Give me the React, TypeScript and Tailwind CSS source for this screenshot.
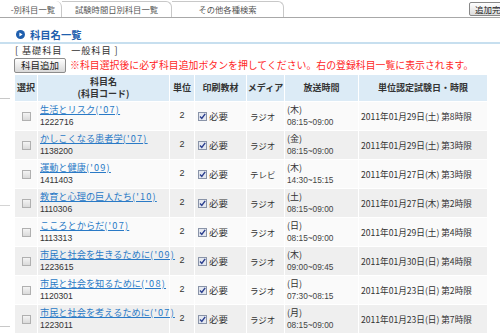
import React from "react";

const rows = [
  { name: "生活とリスク", yr: "('07)", code: "1222716", media: "ラジオ", day: "(木)", time: "08:15~09:00", exam: "2011年01月29日(土) 第8時限" },
  { name: "かしこくなる患者学", yr: "('07)", code: "1138200", media: "ラジオ", day: "(金)", time: "08:15~09:00", exam: "2011年01月29日(土) 第3時限" },
  { name: "運動と健康", yr: "('09)", code: "1411403", media: "テレビ", day: "(木)", time: "14:30~15:15", exam: "2011年01月27日(木) 第3時限" },
  { name: "教育と心理の巨人たち", yr: "('10)", code: "1110306", media: "ラジオ", day: "(土)", time: "08:15~09:00", exam: "2011年01月27日(木) 第2時限" },
  { name: "こころとからだ", yr: "('07)", code: "1113313", media: "ラジオ", day: "(日)", time: "08:15~09:00", exam: "2011年01月29日(土) 第4時限" },
  { name: "市民と社会を生きるために", yr: "('09)", code: "1223615", media: "ラジオ", day: "(木)", time: "09:00~09:45", exam: "2011年01月30日(日) 第4時限" },
  { name: "市民と社会を知るために", yr: "('08)", code: "1120301", media: "ラジオ", day: "(日)", time: "07:30~08:15", exam: "2011年01月23日(日) 第2時限" },
  { name: "市民と社会を考えるために", yr: "('07)", code: "1223011", media: "ラジオ", day: "(月)", time: "08:15~09:00", exam: "2011年01月23日(日) 第7時限" },
];

function Checked() {
  return (
    <svg width="9" height="9" viewBox="0 0 9 9" className="shrink-0">
      <rect x="0.5" y="0.5" width="8" height="8" fill="#e4e8f0" stroke="#8a94a8" />
      <path d="M2 4.5 L3.8 6.5 L7.2 1.8" fill="none" stroke="#2b3f8f" strokeWidth="1.4" />
    </svg>
  );
}

export default function App() {
  return (
    <div
      className="w-[500px] h-[335px] overflow-hidden bg-white text-[#333]"
      style={{ fontFamily: '"Noto Sans CJK JP", "Noto Sans", sans-serif' }}
    >
      {/* tab bar */}
      <div className="flex h-[18px] items-end border-b border-[#a8a8a8]">
        <div className="flex h-[16px] w-[62px] shrink-0 items-center justify-end pr-[6px] border-r border-[#c8c8c8] rounded-tr-[6px] text-[8.3px] text-[#555] whitespace-nowrap">
          -別科目一覧
        </div>
        <div className="flex h-[16px] w-[110px] shrink-0 items-center justify-center border-r border-t border-[#c8c8c8] rounded-tr-[6px] text-[8.3px] text-[#555] whitespace-nowrap">
          試験時間日別科目一覧
        </div>
        <div className="flex h-[16px] w-[112px] shrink-0 items-center justify-center border-r border-t border-[#c8c8c8] rounded-tr-[6px] text-[8.3px] text-[#555] whitespace-nowrap">
          その他各種検索
        </div>
        <div className="flex-1" />
        <div className="mb-[1px] mr-[-12px] flex h-[14px] w-[43px] shrink-0 items-center pl-[5px] border border-[#888] rounded-[2px] bg-gradient-to-b from-white to-[#dcdcdc] text-[8.5px] text-[#222] whitespace-nowrap">
          追加完了
        </div>
      </div>

      {/* title */}
      <div className="flex items-center gap-[5px] pl-[16px] pt-[9px] h-[24px]">
        <svg width="9" height="9" viewBox="0 0 9 9">
          <circle cx="4.5" cy="4.5" r="4.5" fill="#1f5fae" />
          <path d="M3.4 2.5 L6.6 4.5 L3.4 6.5 Z" fill="white" />
        </svg>
        <span className="text-[10.3px] font-bold text-[#1f5fae]">科目名一覧</span>
      </div>
      <div className="h-[2px] bg-[#c7dfef]" />

      <div className="flex">
        {/* left sidebar remnants */}
        <div className="w-[10px] shrink-0">
          <div className="mt-[54px] h-px bg-[#c8c8c8]" />
          <div className="mt-[106px] h-px bg-[#d4d4d4]" />
          <div className="mt-[120px] h-px bg-[#c8c8c8]" />
        </div>

        <div className="ml-[4px] flex flex-col">
          <div className="h-[13px] flex items-center text-[9.2px] tracking-[0.9px] text-[#333] pl-[1px]">
            [&nbsp;基礎科目&nbsp;&nbsp;&nbsp;一般科目&nbsp;]
          </div>
          <div className="mt-[1px] flex items-center h-[15px] gap-[4px]">
            <div className="flex h-[15px] w-[52px] items-center justify-center border border-[#8c8c8c] rounded-[2px] bg-gradient-to-b from-white to-[#d8d8d8] text-[9.5px] text-[#222]">
              科目追加
            </div>
            <span className="text-[9.9px] text-[#ff1f1f] whitespace-nowrap">
              ※科目選択後に必ず科目追加ボタンを押してください。右の登録科目一覧に表示されます。
            </span>
          </div>

          <table className="mt-[1px] w-[473px] border-collapse table-fixed">
            <colgroup>
              <col className="w-[23px]" />
              <col className="w-[132px]" />
              <col className="w-[25px]" />
              <col className="w-[52px]" />
              <col className="w-[38px]" />
              <col className="w-[74px]" />
              <col className="w-[129px]" />
            </colgroup>
            <thead>
              <tr className="h-[27px] bg-[#dcebf6]">
                <th className="border border-white text-[9px] font-bold">選択</th>
                <th className="border border-white text-[9px] font-bold leading-[12px]">
                  科目名
                  <br />
                  (科目コード)
                </th>
                <th className="border border-white text-[9px] font-bold">単位</th>
                <th className="border border-white text-[9px] font-bold">印刷教材</th>
                <th className="border border-white text-[9px] font-bold">メディア</th>
                <th className="border border-white text-[9px] font-bold">放送時間</th>
                <th className="border border-white text-[9px] font-bold">単位認定試験日・時限</th>
              </tr>
            </thead>
            <tbody>
              {rows.map((r, i) => (
                <tr key={r.code} className={`h-[29px] ${i % 2 === 0 ? "bg-[#fafafa]" : "bg-[#efefef]"}`}>
                  <td className="border border-white">
                    <div className="flex justify-center">
                      <span className="block w-[9px] h-[9px] border border-[#b0b0b0] bg-gradient-to-b from-[#f4f4f4] to-[#dadada]" />
                    </div>
                  </td>
                  <td className="border border-white pl-[2px] leading-[13px]">
                    <div className="text-[9.2px] text-[#2a7ac6] underline whitespace-nowrap">
                      {r.name}
                      <span className="tracking-[1.2px]">{r.yr}</span>
                    </div>
                    <div className="text-[8.6px] text-[#333]" style={{ fontFamily: '"Liberation Sans", sans-serif' }}>{r.code}</div>
                  </td>
                  <td className="border border-white text-center text-[9px]" style={{ fontFamily: '"Liberation Sans", sans-serif' }}>2</td>
                  <td className="border border-white pl-[3px]">
                    <div className="flex items-center gap-[2px]">
                      <Checked />
                      <span className="text-[9.5px]">必要</span>
                    </div>
                  </td>
                  <td className="border border-white pl-[3px] text-[8.5px]">{r.media}</td>
                  <td className="border border-white pl-[2px] leading-[12px]">
                    <div className="text-[9px]">{r.day}</div>
                    <div className="text-[8.3px] text-[#444]" style={{ fontFamily: '"Liberation Sans", sans-serif' }}>{r.time}</div>
                  </td>
                  <td className="border border-white pl-[2px] text-[8.6px] whitespace-nowrap">{r.exam}</td>
                </tr>
              ))}
            </tbody>
          </table>
        </div>
      </div>
    </div>
  );
}
